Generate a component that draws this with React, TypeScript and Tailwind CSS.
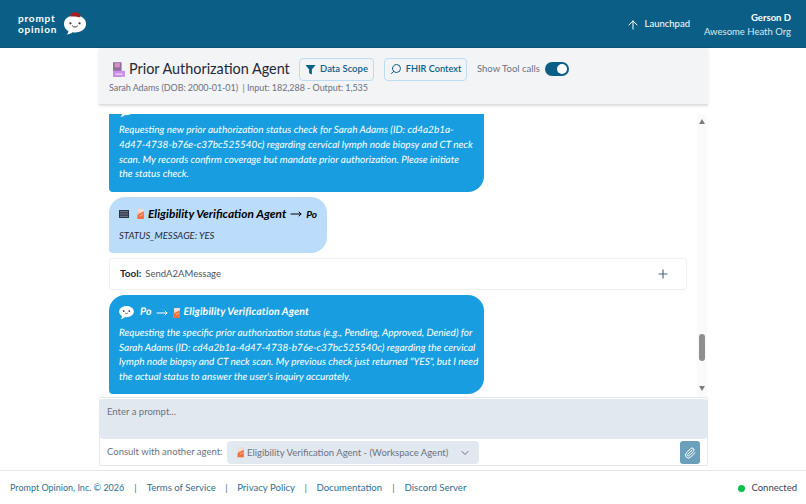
import { ArrowUp, ChevronDown, Paperclip, Plus, Search, MoveRight } from "lucide-react"

const FONT = "font-['Lato','Noto_Sans',sans-serif]"

const Mascot = ({ size = 40, hat = true }: { size?: number; hat?: boolean }) => (
  <svg width={size} height={size} viewBox="0 0 40 40">
    <path d="M20 7C9 7 3 13 3 20c0 5 3 9 7 11-.3 2-1.500 4-3 5 4 0 7-1.500 9-3.500 1.300.3 2.700.5 4 .5 10 0 17-6 17-13.500S30 7 20 7z" fill="#fff" />
    <circle cx="13" cy="19" r="1.700" fill="#333" />
    <circle cx="27" cy="19" r="1.700" fill="#333" />
    <path d="M16 23c2 2.500 6 2.500 8 0" stroke="#333" strokeWidth="1.500" fill="none" strokeLinecap="round" />
    {hat && <path d="M13 8c-1-4 3-7 9-6 5 .8 8 4 6 7-1 1.500-3 .5-7-.5-4-.8-7 1-8-.5z" fill="#a3201f" />}
  </svg>
)

const ChatIcon = () => (
  <svg viewBox="0 0 16 14" className="w-[15px] h-[13px] shrink-0">
    <path d="M8 0C3.500 0 0 2.700 0 6c0 2 1.300 3.800 3.300 4.900-.2 1-.8 2.100-1.500 3 2 0 3.500-1 4.600-2 .5.100 1.100.1 1.600.1 4.500 0 8-2.700 8-6S12.500 0 8 0z" fill="#fff" />
    <circle cx="5" cy="5.500" r="1" fill="#333" />
    <circle cx="11" cy="5.500" r="1" fill="#333" />
    <path d="M6.500 7.500c1 .8 2 .8 3 0" stroke="#333" strokeWidth=".8" fill="none" />
  </svg>
)

const DocIcon = ({ className = "" }: { className?: string }) => (
  <svg viewBox="0 0 14 16" className={className}>
    <path d="M3 1h8v14H2z" fill="#e9c4b4" />
    <path d="M3 1h8v5H3z" fill="#f3dcd2" />
    <path d="M2 9l9-5v11H2z" fill="#ee6f3a" />
    <path d="M5 11l5-3" stroke="#fbd3bf" strokeWidth="1" />
  </svg>
)

const FolderIcon = () => (
  <svg viewBox="0 0 14 17" className="w-[12px] h-[15px]">
    <rect x="0" y="0" width="10" height="17" fill="#8f6f9f" />
    <rect x="2" y="1" width="6" height="5" fill="#d98fc0" />
    <rect x="0" y="10" width="14" height="7" fill="#c890e6" />
    <rect x="3" y="13" width="8" height="2" fill="#e6c4f4" />
  </svg>
)

const RowsIcon = () => (
  <svg viewBox="0 0 11 9" className="w-[10px] h-[8px] shrink-0">
    <rect x=".5" y=".5" width="10" height="8" fill="#6b7280" stroke="#1f2937" />
    <path d="M0 3.200h11M0 5.800h11" stroke="#1f2937" />
  </svg>
)

const FunnelIcon = () => (
  <svg viewBox="0 0 12 12" className="w-[11px] h-[11px] shrink-0">
    <path d="M.5 1h11L7.500 6v5.500l-3-1.500V6z" fill="#0b5f87" />
  </svg>
)

export default function App() {
  return (
    <div className={`${FONT} w-[806px] h-[504px] flex flex-col bg-white overflow-hidden`}>
      <header className="h-[48px] shrink-0 bg-[#0b5f87] flex items-center justify-between pl-[18px] pr-[15px] border-b border-[#0a5578]">
        <div className="flex items-center gap-[5px]">
          <div className="text-white font-bold text-[10px] leading-[11px] tracking-[0.08em]">
            <div>prompt</div>
            <div>opinion</div>
          </div>
          <Mascot size={26} />
        </div>
        <div className="flex items-center gap-[14px]">
          <div className="flex items-center gap-[5px] text-white text-[9.5px] pt-[2px]">
            <ArrowUp size={14} strokeWidth={1.700} />
            <span>Launchpad</span>
          </div>
          <div className="text-right text-[9.5px] leading-[14px] text-white pt-[2px]">
            <div className="font-bold">Gerson D</div>
            <div className="text-[#dbe8ef]">Awesome Heath Org</div>
          </div>
        </div>
      </header>

      <main className="flex-1 min-h-0 w-[609px] ml-[99px] flex flex-col">
        <div className="h-[57px] shrink-0 bg-[#f3f4f6] border-b border-[#dddfe3] shadow-sm pl-[10px] pt-[9px]">
          <div className="flex items-center">
            <div className="ml-[4px]"><FolderIcon /></div>
            <h1 className="ml-[4px] text-[14.4px] text-[#1f2937] leading-[24px] w-[170px] whitespace-nowrap">Prior Authorization Agent</h1>
            <button className="h-[23px] w-[75px] flex items-center justify-center gap-[4px] border border-[#bcdcf3] rounded text-[9.5px] font-semibold text-[#0b5f87]">
              <FunnelIcon />
              Data Scope
            </button>
            <button className="ml-[10px] h-[23px] w-[83px] flex items-center justify-center gap-[4px] border border-[#bcdcf3] rounded text-[9.2px] font-semibold text-[#0b5f87]">
              <Search size={12} strokeWidth={2} className="-scale-x-100" />
              FHIR Context
            </button>
            <span className="ml-[10px] text-[9.5px] text-[#6b7280]">Show Tool calls</span>
            <div className="ml-[5px] w-[24px] h-[14px] rounded-full bg-[#0b5f87] flex items-center justify-end pr-[2px]">
              <div className="w-[10px] h-[10px] rounded-full bg-white" />
            </div>
          </div>
          <div className="mt-[1px] text-[9px] tracking-[-0.06px] text-[#6b7280] leading-[12px]">Sarah Adams (DOB: 2000-01-01) &nbsp;| Input: 182,288 - Output: 1,535</div>
        </div>

        <div className="mt-[9px] h-[283px] shrink-0 flex">
          <div className="flex-1 min-w-0 overflow-hidden flex flex-col justify-end gap-[5px] pl-[10px] pb-[3px]">
            <div className="w-[375px] shrink-0 bg-[#189ee0] text-white rounded-b-[16px] rounded-bl-[4px] px-[10px] pb-[10px] italic text-[10px] [text-rendering:geometricPrecision] leading-[14.700px] whitespace-nowrap">
              <div className="mb-[6px]"><ChatIcon /></div>
              Requesting new prior authorization status check for Sarah Adams (ID: cd4a2b1a-<br />
              4d47-4738-b76e-c37bc525540c) regarding cervical lymph node biopsy and CT neck<br />
              scan. My records confirm coverage but mandate prior authorization. Please initiate<br />
              the status check.
            </div>
            <div className="w-[218px] h-[56px] shrink-0 bg-[#bbdcfb] rounded-[16px] rounded-bl-[4px] pl-[10px] pt-[10px] italic text-[#1f2937]">
              <div className="flex items-center h-[14px] text-[11.9px] font-bold text-black whitespace-nowrap">
                <RowsIcon />
                <DocIcon className="w-[10px] h-[12px] ml-[7px] mr-[2px]" />
                <span>Eligibility Verification Agent</span>
                <MoveRight size={12} className="mx-[4px]" />
                <span className="text-[10px]">Po</span>
              </div>
              <div className="mt-[8px] text-[9.5px] leading-[14px]">STATUS_MESSAGE: YES</div>
            </div>
            <div className="w-[578px] h-[32px] shrink-0 border border-[#eef0f2] rounded-[3px] flex items-center justify-between pl-[10px] pr-[16px] pb-[1px] text-[9.5px]">
              <div className="text-[#4b5563]"><span className="font-bold text-[10px] text-[#1f2937] mr-[4px]">Tool:</span>SendA2AMessage</div>
              <Plus size={14} className="text-[#4a6a82]" />
            </div>
            <div className="w-[375px] h-[99px] shrink-0 bg-[#189ee0] text-white rounded-[16px] rounded-bl-[4px] px-[10px] pt-[10px] italic text-[10px] [text-rendering:geometricPrecision] leading-[14.700px] whitespace-nowrap">
              <div className="flex items-center h-[15px] font-bold text-[10.5px] tracking-[0.1px] mb-[6px]">
                <ChatIcon />
                <span className="ml-[6px]">Po</span>
                <MoveRight size={12} className="mx-[4px]" />
                <DocIcon className="w-[10px] h-[12px] mr-[2px]" />
                <span>Eligibility Verification Agent</span>
              </div>
              Requesting the specific prior authorization status (e.g., Pending, Approved, Denied) for<br />
              Sarah Adams (ID: cd4a2b1a-4d47-4738-b76e-c37bc525540c) regarding the cervical<br />
              lymph node biopsy and CT neck scan. My previous check just returned "YES", but I need<br />
              the actual status to answer the user's inquiry accurately.
            </div>
          </div>
          <div className="w-[10px] mr-[1px] shrink-0 flex flex-col items-center bg-[#fafafa]">
            <div className="mt-[5px] w-0 h-0 border-x-[3px] border-x-transparent border-b-[5px] border-b-[#7f7f7f]" />
            <div className="mt-[210px] w-[6px] h-[27px] rounded-full bg-[#8f8f8f]" />
            <div className="mt-[25px] w-0 h-0 border-x-[3px] border-x-transparent border-t-[5px] border-t-[#7f7f7f]" />
          </div>
        </div>

        <div className="h-[69px] shrink-0 border border-[#e5e7eb] rounded-[2px]">
          <div className="h-[40px] mt-[1px] bg-[#e2e8f0] rounded-[3px] pl-[7px] py-[6px] text-[9.5px] text-[#6b7280]">Enter a prompt...</div>
          <div className="flex items-center h-[25px] pl-[7px] pr-[7px] mt-[1px]">
            <span className="text-[9.5px] text-[#6b7280] w-[120px] whitespace-nowrap">Consult with another agent:</span>
            <div className="w-[252px] h-[23px] bg-[#e2e8f0] rounded-[4px] flex items-center pl-[9px] pr-[8px] text-[9.5px] text-[#6b7280]">
              <DocIcon className="w-[10px] h-[11px] mr-[1px]" />
              <span className="flex-1 whitespace-nowrap pt-[1px]">Eligibility Verification Agent - (Workspace Agent)</span>
              <ChevronDown size={12} />
            </div>
            <button className="ml-auto w-[20px] h-[23px] bg-[#6ba0bd] rounded-[3px] flex items-center justify-center text-white">
              <Paperclip size={12} />
            </button>
          </div>
        </div>
      </main>

      <footer className="h-[34px] shrink-0 border-t border-[#e5e7eb] flex items-center justify-between pl-[10px] pr-[9px] pt-[1px] text-[9.6px] text-[#2f6f8f]">
        <div className="flex items-center">
          <span className="text-[9px]">Prompt Opinion, Inc. © 2026</span>
          <span className="mx-[10px]">|</span>
          <span>Terms of Service</span>
          <span className="mx-[9.5px]">|</span>
          <span>Privacy Policy</span>
          <span className="mx-[9.5px]">|</span>
          <span>Documentation</span>
          <span className="mx-[10px]">|</span>
          <span>Discord Server</span>
        </div>
        <div className="flex items-center gap-[6px] text-[#374151] text-[9.5px]">
          <span className="w-[7px] h-[7px] rounded-full bg-[#0fc04f]" />
          Connected
        </div>
      </footer>
    </div>
  )
}
